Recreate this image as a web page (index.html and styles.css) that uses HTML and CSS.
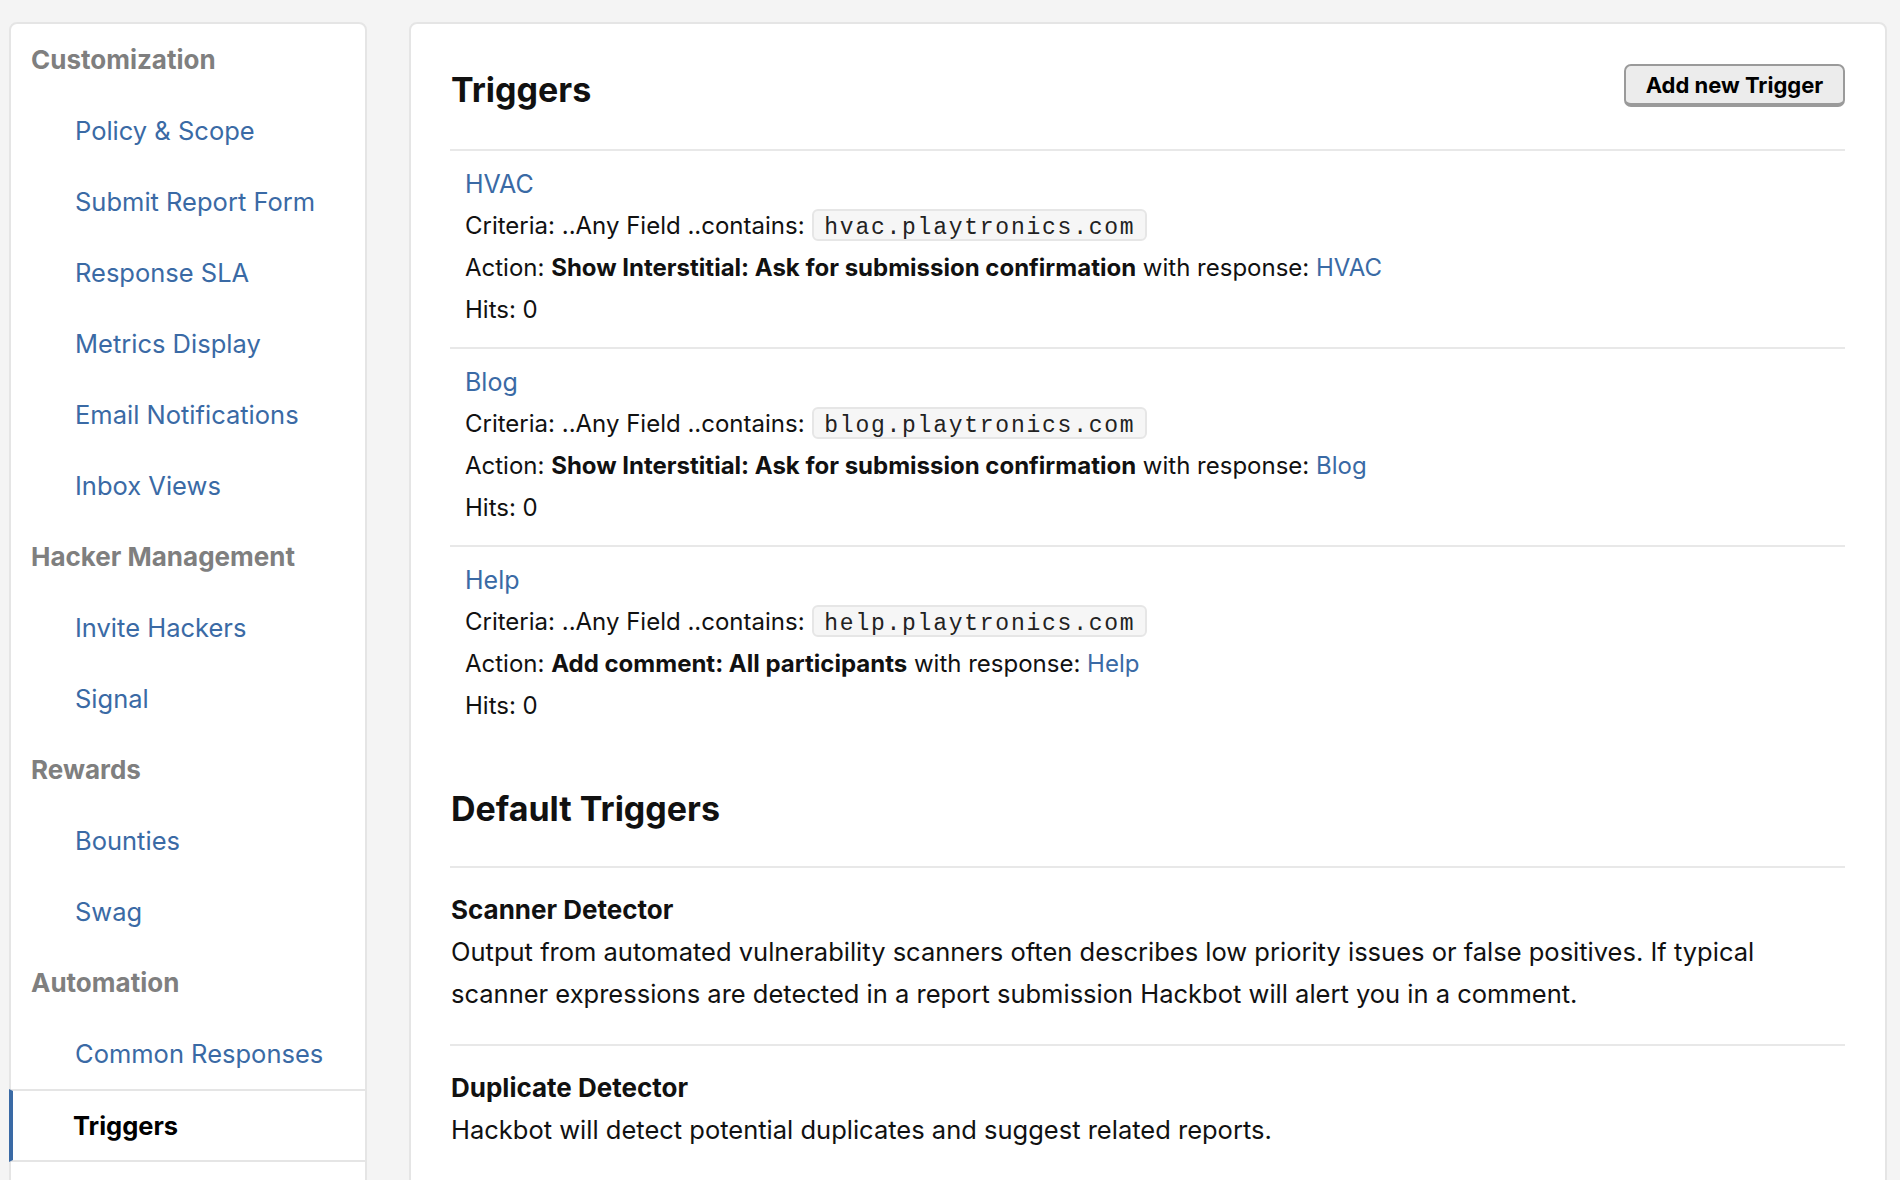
FILE: index.html
```html
<!DOCTYPE html>
<html lang="en">
<head>
<meta charset="utf-8">
<title>Triggers</title>
<link rel="stylesheet" href="styles.css">
</head>
<body>
<div class="layout">
  <nav class="sidebar">
    <div class="nav-heading">Customization</div>
    <a class="nav-item" href="#">Policy &amp; Scope</a>
    <a class="nav-item" href="#">Submit Report Form</a>
    <a class="nav-item" href="#">Response SLA</a>
    <a class="nav-item" href="#">Metrics Display</a>
    <a class="nav-item" href="#">Email Notifications</a>
    <a class="nav-item" href="#">Inbox Views</a>
    <div class="nav-heading">Hacker Management</div>
    <a class="nav-item" href="#">Invite Hackers</a>
    <a class="nav-item" href="#">Signal</a>
    <div class="nav-heading">Rewards</div>
    <a class="nav-item" href="#">Bounties</a>
    <a class="nav-item" href="#">Swag</a>
    <div class="nav-heading">Automation</div>
    <a class="nav-item" href="#">Common Responses</a>
    <a class="nav-item active" href="#">Triggers</a>
    <a class="nav-item" href="#">&nbsp;</a>
  </nav>
  <main class="content">
    <div class="header">
      <h1 class="title">Triggers</h1>
      <button class="btn">Add new Trigger</button>
    </div>
    <div class="trigger-list">
      <div class="trigger">
        <a class="trigger-name" href="#">HVAC</a>
        <div class="line">Criteria: ..Any Field ..contains: <code class="code">hvac.playtronics.com</code></div>
        <div class="line">Action: <strong>Show Interstitial: Ask for submission confirmation</strong> with response: <a class="link" href="#">HVAC</a></div>
        <div class="line">Hits: 0</div>
      </div>
      <div class="trigger">
        <a class="trigger-name" href="#">Blog</a>
        <div class="line">Criteria: ..Any Field ..contains: <code class="code">blog.playtronics.com</code></div>
        <div class="line">Action: <strong>Show Interstitial: Ask for submission confirmation</strong> with response: <a class="link" href="#">Blog</a></div>
        <div class="line">Hits: 0</div>
      </div>
      <div class="trigger">
        <a class="trigger-name" href="#">Help</a>
        <div class="line">Criteria: ..Any Field ..contains: <code class="code">help.playtronics.com</code></div>
        <div class="line">Action: <strong>Add comment: All participants</strong> with response: <a class="link" href="#">Help</a></div>
        <div class="line">Hits: 0</div>
      </div>
    </div>
    <h2 class="title default-title">Default Triggers</h2>
    <div class="default">
      <div class="default-name">Scanner Detector</div>
      <p class="default-desc">Output from automated vulnerability scanners often describes low priority issues or false positives. If typical scanner expressions are detected in a report submission Hackbot will alert you in a comment.</p>
    </div>
    <div class="default">
      <div class="default-name">Duplicate Detector</div>
      <p class="default-desc">Hackbot will detect potential duplicates and suggest related reports.</p>
    </div>
  </main>
</div>
</body>
</html>
```

FILE: styles.css
```css
html, body {
  margin: 0;
  padding: 0;
}
body {
  background: #f4f4f4;
  font-family: Inter, "Helvetica Neue", Arial, sans-serif;
  color: #111;
  overflow: hidden;
  height: 1180px;
}
.layout {
  display: flex;
  gap: 42px;
  padding: 22px 13px 0 9px;
  align-items: flex-start;
}
.sidebar {
  width: 358px;
  box-sizing: border-box;
  flex: none;
  background: #fff;
  border: 2px solid #e5e5e5;
  border-radius: 8px;
  display: flex;
  flex-direction: column;
  min-height: 1300px;
}
.nav-heading {
  height: 71px;
  line-height: 71px;
  padding-left: 20px;
  font-size: 26px;
  font-weight: 700;
  color: #7f7f7f;
}
.nav-item {
  height: 71px;
  line-height: 71px;
  padding-left: 64px;
  font-size: 25.5px;
  color: #3a6aa5;
  text-decoration: none;
}
.nav-item.active {
  box-sizing: border-box;
  height: 73px;
  line-height: 69px;
  border-top: 2px solid #e5e5e5;
  border-bottom: 2px solid #e5e5e5;
  border-left: 4px solid #3a6aa5;
  padding-left: 60px;
  color: #000;
  font-weight: 700;
  margin-left: -2px;
}
.content {
  flex: 1;
  background: #fff;
  border: 2px solid #e5e5e5;
  border-radius: 8px;
  padding: 40px 40px 0 39px;
  min-height: 1300px;
}
.header {
  display: flex;
  justify-content: space-between;
  align-items: flex-start;
  padding-bottom: 39px;
}
.title {
  margin: 6px 0 0 1px;
  font-size: 34px;
  line-height: 40px;
  font-weight: 700;
  color: #111;
}
.btn {
  width: 221px;
  height: 43px;
  box-sizing: border-box;
  background: #ececec;
  border: 2px solid #9a9a9a;
  border-bottom-width: 4px;
  border-radius: 7px;
  font-family: Inter, Arial, sans-serif;
  font-weight: 700;
  font-size: 22px;
  color: #000;
  padding: 0;
}
.trigger {
  border-top: 2px solid #e8e8e8;
  padding: 12px 15px 16px;
  font-size: 24px;
  line-height: 42px;
}
.trigger-name {
  display: block;
  height: 42px;
  font-size: 25px;
  color: #3a6aa5;
  text-decoration: none;
}
.line {
  height: 42px;
  line-height: 42px;
}
.line strong {
  font-weight: 700;
}
.link {
  color: #3a6aa5;
  text-decoration: none;
}
.code {
  display: inline-block;
  margin-left: 1px;
  padding: 3px 10px 0;
  height: 32px;
  line-height: 28px;
  box-sizing: border-box;
  vertical-align: baseline;
  background: #f6f6f6;
  border: 2px solid #e6e6e6;
  border-radius: 6px;
  font-family: "Liberation Mono", "Courier New", monospace;
  font-size: 23px;
  letter-spacing: 1.75px;
  color: #222;
}
.default-title {
  margin: 46px 0 37px 1px;
}
.default {
  border-top: 2px solid #e8e8e8;
  padding: 21px 0 29px 1px;
  font-size: 25.5px;
  line-height: 42px;
}
.default-name {
  font-size: 26px;
  font-weight: 700;
}
.default-desc {
  margin: 0;
}
```
